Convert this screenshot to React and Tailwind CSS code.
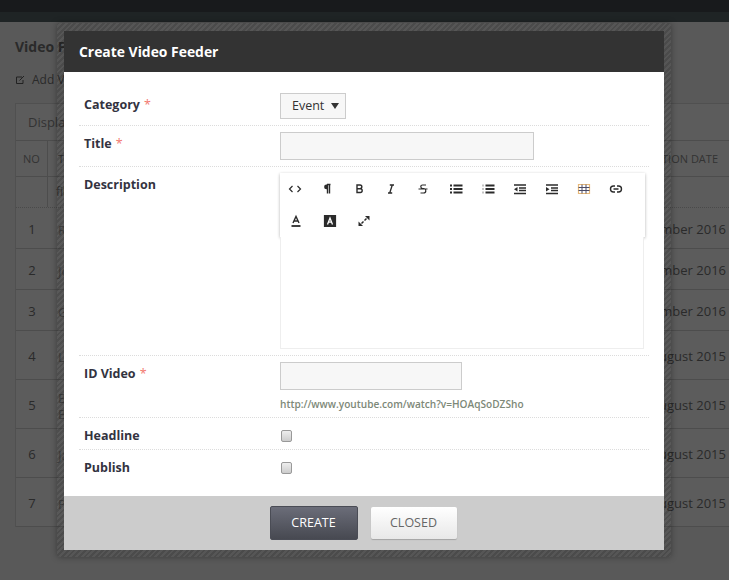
const F = { fontFamily: '"Open Sans", sans-serif' };

function I({ children }) {
  return (
    <svg width="14" height="14" viewBox="0 0 14 14" fill="none" stroke="#2b2b2b" strokeWidth="1.2">
      {children}
    </svg>
  );
}

const icons1 = [
  <I><path d="M4.500 4 1.500 7l3 3M9.500 4l3 3-3 3" /></I>,
  <I><path d="M7.500 2.500v9M9.500 2.500v9M7 2.500h3.500" strokeWidth="1.400" /><path d="M8 2.500H6.500a2.200 2.200 0 0 0 0 4.800H8z" fill="#2b2b2b" stroke="none" /></I>,
  <I><path d="M5 3h3a1.700 1.700 0 0 1 0 3.700H5zM5 6.700h3.300a1.900 1.900 0 0 1 0 3.800H5zM5 2.500v8.500" strokeWidth="1.400" /></I>,
  <I><path d="M5.800 3h4.200M4 11h4.200M8.300 3l-2.600 8" strokeWidth="1.300" /></I>,
  <I><path d="M10 3H6.500C4.200 3 4.200 6 6.500 6.500h1.500c2.500.4 2.500 4.500-.5 4.500H4.500M2.500 7h9" /></I>,
  <I><path d="M4.500 3.500h9M4.500 7h9M4.500 10.500h9" strokeWidth="1.800" /><path d="M1 3.500h2M1 7h2M1 10.500h2" strokeWidth="1.800" /></I>,
  <I><path d="M4.500 3.500h9M4.500 7h9M4.500 10.500h9" strokeWidth="1.800" /><path d="M2 2.500v2M2 6v2M2 9.500v2" strokeWidth="1" stroke="#888" /></I>,
  <I><path d="M1 3h12M6 6h7M6 8.500h7M1 11.500h12" strokeWidth="1.400" /><path d="M4.500 5v4.500L1 7.200z" fill="#2b2b2b" stroke="none" /></I>,
  <I><path d="M1 3h12M6 6h7M6 8.500h7M1 11.500h12" strokeWidth="1.400" /><path d="M1 5v4.500l3.500-2.300z" fill="#2b2b2b" stroke="none" /></I>,
  <I><path d="M1.500 2.500h11v9h-11z" stroke="#e8b878" /><path d="M1.500 5.500h11M1.500 8.500h11M5 2.500v9M9 2.500v9" stroke="#4d4d66" strokeWidth="1" /></I>,
  <I><path d="M6 4H4.500a3 3 0 0 0 0 6H6M8 4h1.500a3 3 0 0 1 0 6H8M4.500 7h5" strokeWidth="1.400" /></I>,
];

const icons2 = [
  <I><path d="M4 9 7 2.500 10 9M5 7h4" strokeWidth="1.400" /><path d="M2.500 12h9" strokeWidth="1.800" /></I>,
  <I><path d="M1.500 1.500h11v11h-11z" fill="#2b2b2b" /><path d="M4.500 10.500 7 4l2.500 6.500M5.500 8.200h3" stroke="#fff" strokeWidth="1.300" /></I>,
  <I><path d="M8 2h4.500v4.500z" fill="#2b2b2b" stroke="none" /><path d="M6 12H1.500V7.500z" fill="#2b2b2b" stroke="none" /><path d="M9.500 4.500l-2 2M4.500 9.500l2-2" strokeWidth="1.500" /></I>,
];

const rows = [
  ["1", "R", "", "September 2016", "h-[41px]"],
  ["2", "Jo", "", "September 2016", "h-[41px]"],
  ["3", "G", "", "September 2016", "h-[41px]"],
  ["4", "L", "", "August 2015", "h-[49px]"],
  ["5", "B", "B", "August 2015", "h-[49px]"],
  ["6", "Ja", "", "August 2015", "h-[49px]"],
  ["7", "P", "", "August 2015", "h-[49px]"],
];

function Star() {
  return <span className="text-[#f2786f] font-normal ml-1">*</span>;
}

function Check() {
  return (
    <input
      type="checkbox"
      readOnly
      className="mt-[3px] block h-[12px] w-[11px] ml-[1px] appearance-none rounded-[2px] border border-[#999] bg-gradient-to-b from-[#eeeeee] to-[#cccccc]"
    />
  );
}

function Row({ label, star, className, labelClass = "", children }) {
  return (
    <div className={`flex border-b border-dotted border-[#dcdcdc] ${className}`}>
      <div className={`w-[201px] pl-[5px] text-[12.500px] font-bold text-[#33333f] leading-[18px] ${labelClass}`}>
        {label}
        {star && <Star />}
      </div>
      <div className="flex-1">{children}</div>
    </div>
  );
}

export default function App() {
  return (
    <div style={F} className="relative w-[729px] h-[580px] overflow-hidden bg-[#595959] text-[#2a2a2a]">
      <div className="h-[12px] bg-[#181a1c]" />
      <div className="h-[10px] bg-[#1f2425]" />
      <div className="px-[15px]">
        <h1 className="mt-[16px] text-[14px] font-bold leading-[18px] text-[#2a2a2a]">Video Feeder</h1>
        <div className="mt-[16px] flex items-center gap-[7px] text-[12px] leading-[16px] text-[#2a2a2a]">
          <svg width="10" height="10" viewBox="0 0 10 10" fill="none" stroke="#222" strokeWidth="1">
            <path d="M7 2H1.500v6.500H8V5M4.500 5.500 9 1" />
          </svg>
          Add Video Feeder
        </div>
        <div className="mt-[15px] w-[730px] border-t border-l border-[#505050] bg-[#5c5c5c]">
          <div className="h-[37px] border-b border-[#4d4d4d] pl-[12px] text-[13px] leading-[36px] text-[#333]">Display</div>
          <div className="flex h-[36px] border-b border-[#4d4d4d] text-[11px] leading-[36px] text-[#333]">
            <div className="w-[32px] border-r border-[#4d4d4d] text-center">NO</div>
            <div className="flex-1 pl-[10px]">TITLE</div>
            <div className="w-[150px] pr-[27px] whitespace-nowrap text-right">PUBLICATION DATE</div>
          </div>
          <div className="flex h-[31px] border-b border-dotted border-[#4a4a4a] text-[12px] leading-[30px] text-[#333]">
            <div className="w-[32px] border-r border-[#4d4d4d]" />
            <div className="pl-[8px]">filter</div>
          </div>
          {rows.map(([n, a, b, d, h]) => (
            <div key={n} className={`flex items-center border-b border-[#4d4d4d] pt-[4px] text-[13px] text-[#2a2a2a] ${h}`}>
              <div className="w-[32px] text-center">{n}</div>
              <div className="flex-1 pl-[10px] leading-[16px] text-[#404040]">
                <div>{a}</div>
                {b && <div>{b}</div>}
              </div>
              <div className="w-[150px] whitespace-nowrap text-right pr-[19px]">{d}</div>
            </div>
          ))}
        </div>
      </div>

      <div className="absolute left-[57px] top-[23px] w-[614px] h-[534px] px-[7px] pt-[8px] rounded-[3px] shadow-[0_0_6px_rgba(0,0,0,0.35)] bg-[repeating-linear-gradient(135deg,rgba(0,0,0,0.16)_0px,rgba(0,0,0,0.16)_2px,rgba(0,0,0,0.04)_2px,rgba(0,0,0,0.04)_4px)]">
        <div className="flex h-[519px] w-[600px] flex-col bg-white">
          <div className="flex h-[41px] items-center bg-[#333333] pl-[15px] pt-[2px] text-[13.900px] font-bold text-white">Create Video Feeder</div>
          <div className="flex-1 px-[15px] pt-[12px]">
            <Row label="Category" star className="h-[42px]" labelClass="pt-[12px]">
              <div className="mt-[9px] flex h-[26px] w-[66px] items-center border border-[#cccccc] bg-[#f7f7f7] pl-[11px] text-[12.500px] text-[#333]">
                Event
                <svg className="ml-[7px]" width="8" height="6" viewBox="0 0 8 6"><path d="M0 0h8L4 6z" fill="#333" /></svg>
              </div>
            </Row>
            <Row label="Title" star className="h-[41px] pt-[9px]">
              <div className="-mt-[3px] h-[28px] w-[254px] border border-[#cccccc] bg-[#f7f7f7]" />
            </Row>
            <Row label="Description" className="h-[189px] pt-[9px]">
              <div className="-mt-[3px] w-[365px] h-[64px] bg-white shadow-[0_1px_3px_rgba(0,0,0,0.3)]">
                <div className="flex h-[32px] items-center -ml-[1px]">
                  {icons1.map((ic, i) => (
                    <div key={i} className="flex w-[32.100px] justify-center">{ic}</div>
                  ))}
                </div>
                <div className="flex h-[31px] items-center -ml-[1px]">
                  {icons2.map((ic, i) => (
                    <div key={i} className="flex w-[34px] justify-center">{ic}</div>
                  ))}
                </div>
              </div>
              <div className="h-[112px] w-[364px] border border-t-0 border-[#eeeeee] bg-white" />
            </Row>
            <Row label="ID Video" star className="h-[62px] pt-[9px]">
              <div className="-mt-[3px] h-[28px] w-[182px] border border-[#cccccc] bg-[#f7f7f7]" />
              <div className="mt-[6px] text-[10.100px] font-semibold leading-[16px] text-[#7d8878]">http://www.youtube.com/watch?v=HOAqSoDZSho</div>
            </Row>
            <Row label="Headline" className="h-[32px] pt-[9px]">
              <Check />
            </Row>
            <div className="flex h-[32px] pt-[9px]">
              <div className="w-[201px] pl-[5px] text-[12.500px] font-bold leading-[18px] text-[#33333f]">Publish</div>
              <Check />
            </div>
          </div>
          <div className="flex h-[54px] items-center justify-center gap-[13px] bg-[#cccccc] pr-[2px]">
            <button className="h-[34px] w-[88px] rounded-[2px] border border-[#4a4c55] bg-gradient-to-b from-[#6b6d79] to-[#474951] text-[12.500px] text-white">CREATE</button>
            <button className="h-[32px] w-[86px] rounded-[2px] bg-gradient-to-b from-white to-[#e8e8e8] text-[12.500px] text-[#666] shadow-[0_1px_1px_rgba(0,0,0,0.2)]">CLOSED</button>
          </div>
        </div>
      </div>
    </div>
  );
}
